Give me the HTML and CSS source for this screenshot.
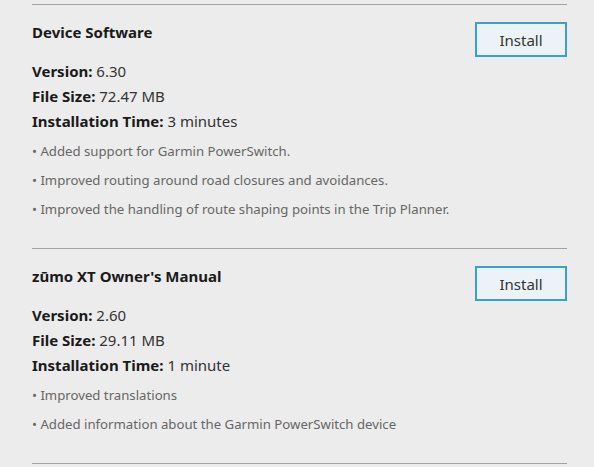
FILE: index.html
```html
<!DOCTYPE html>
<html>
<head>
<meta charset="utf-8">
<link rel="stylesheet" href="styles.css">
</head>
<body>
<div class="list">
  <section class="item">
    <div class="item-head">
      <h2 class="item-title">Device Software</h2>
      <button class="install">Install</button>
    </div>
    <div class="details">
      <div><b>Version:</b> 6.30</div>
      <div><b>File Size:</b> 72.47 MB</div>
      <div><b>Installation Time:</b> 3 minutes</div>
    </div>
    <ul class="notes">
      <li>• Added support for Garmin PowerSwitch.</li>
      <li>• Improved routing around road closures and avoidances.</li>
      <li>• Improved the handling of route shaping points in the Trip Planner.</li>
    </ul>
  </section>
  <section class="item">
    <div class="item-head">
      <h2 class="item-title">zūmo XT Owner's Manual</h2>
      <button class="install">Install</button>
    </div>
    <div class="details">
      <div><b>Version:</b> 2.60</div>
      <div><b>File Size:</b> 29.11 MB</div>
      <div><b>Installation Time:</b> 1 minute</div>
    </div>
    <ul class="notes">
      <li>• Improved translations</li>
      <li>• Added information about the Garmin PowerSwitch device</li>
    </ul>
  </section>
  <div class="end-rule"></div>
</div>
</body>
</html>
```
FILE: styles.css
```css
html, body {
  margin: 0;
  padding: 0;
  background: #ececec;
}
body {
  font-family: "Noto Sans", "Open Sans", sans-serif;
  color: #1e1e1e;
}
.list {
  width: 535px;
  padding: 4px 0 0 32px;
}
.item {
  border-top: 1px solid #a3a3a3;
  padding: 17px 0 24px 0;
}
.item-head {
  display: flex;
  justify-content: space-between;
  align-items: flex-start;
}
.item-title {
  margin: 0;
  font-size: 15px;
  line-height: 20px;
  font-weight: 700;
  color: #1a1a1a;
}
.install {
  width: 92px;
  height: 35px;
  box-sizing: border-box;
  border: 2px solid #3aa0d2;
  background: #ecf3f6;
  font-family: inherit;
  font-size: 15px;
  color: #333;
  padding: 0;
  margin: 0;
}
.details {
  margin-top: 2px;
  font-size: 15px;
  line-height: 25px;
  color: #333;
}
.details b {
  color: #1a1a1a;
}
.notes {
  list-style: none;
  margin: 3px 0 0 0;
  padding: 0;
  font-size: 13.2px;
  line-height: 29px;
  color: #666;
}
.end-rule {
  border-top: 1px solid #a3a3a3;
}
```
